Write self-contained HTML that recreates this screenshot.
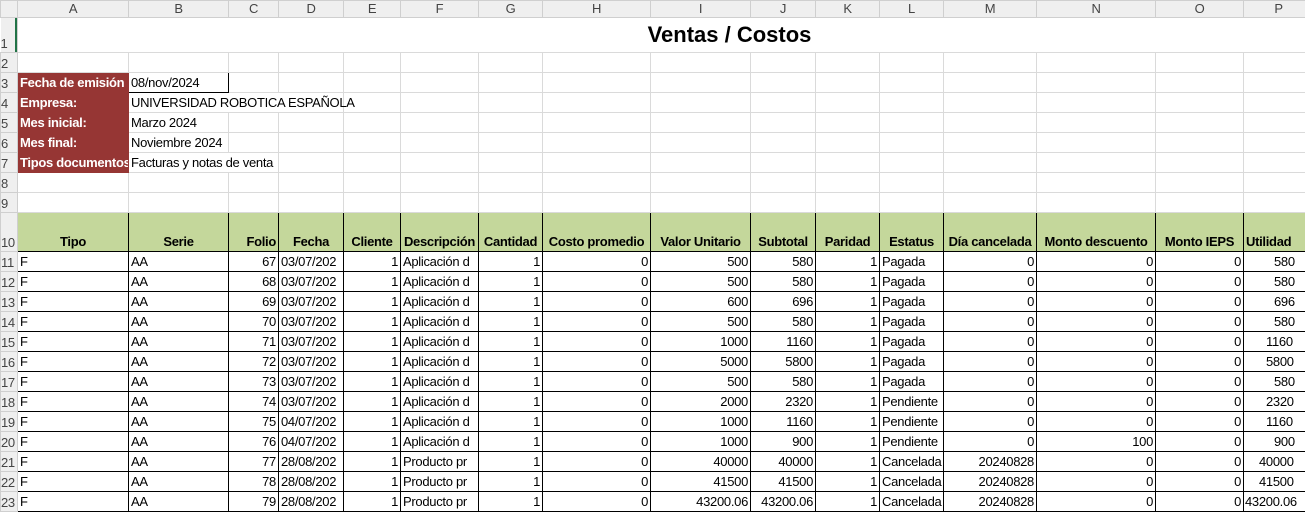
<!DOCTYPE html>
<html><head><meta charset="utf-8"><style>
body{margin:0;width:1305px;height:509px;overflow:hidden;background:#fff;font-family:"Liberation Sans",sans-serif;font-size:13px;letter-spacing:-0.3px;color:#000;position:relative}
table{border-collapse:collapse;table-layout:fixed;position:absolute;left:0;top:0;width:1313px}
td{border:1px solid #dadada;padding:0 2px 1px 2px;white-space:nowrap;overflow:hidden;vertical-align:bottom;height:18px;line-height:16px;box-sizing:content-box}
td.h{background:#efefef;color:#444;text-align:center;vertical-align:middle;border-color:#cfcfcf;font-size:13px}
td.rh{background:#efefef;color:#444;text-align:left;padding:0;border-color:#cfcfcf;font-size:13px}
tr.ch td{height:15px;padding:0}
.m{background:#963634;color:#fff;font-weight:bold;border-color:#963634}
.g{background:#c4d79b;font-weight:bold;text-align:center;border:1px solid #000}
.d{border:1px solid #000}
.r{text-align:right}
.ov{overflow:visible}
</style></head><body>
<table>
<colgroup><col style="width:17px"><col style="width:111px"><col style="width:100px"><col style="width:50px"><col style="width:65px"><col style="width:57px"><col style="width:78px"><col style="width:64px"><col style="width:108px"><col style="width:100px"><col style="width:65px"><col style="width:64px"><col style="width:64px"><col style="width:93px"><col style="width:119px"><col style="width:88px"><col style="width:70px"></colgroup>
<tr class="ch"><td class="h"></td><td class="h">A</td><td class="h">B</td><td class="h">C</td><td class="h">D</td><td class="h">E</td><td class="h">F</td><td class="h">G</td><td class="h">H</td><td class="h">I</td><td class="h">J</td><td class="h">K</td><td class="h">L</td><td class="h">M</td><td class="h">N</td><td class="h">O</td><td class="h">P</td></tr>
<tr><td class="rh" style="height:33px;border-left:none;box-shadow:inset -2px 0 #217346">1</td><td colspan="16" style="height:33px;text-align:center;vertical-align:middle;font-weight:bold;font-size:22px;letter-spacing:0;padding-left:130px;border-left:none">Ventas / Costos</td></tr>
<tr><td class="rh">2</td><td></td><td></td><td></td><td></td><td></td><td></td><td></td><td></td><td></td><td></td><td></td><td></td><td></td><td></td><td></td><td></td></tr>
<tr><td class="rh">3</td><td class="m">Fecha de emisión</td><td style="border:1px solid #000">08/nov/2024</td><td></td><td></td><td></td><td></td><td></td><td></td><td></td><td></td><td></td><td></td><td></td><td></td><td></td><td></td></tr>
<tr><td class="rh">4</td><td class="m">Empresa:</td><td class="ov" style="border-right-color:transparent">UNIVERSIDAD ROBOTICA ESPAÑOLA</td><td style="border-right-color:transparent"></td><td></td><td></td><td></td><td></td><td></td><td></td><td></td><td></td><td></td><td></td><td></td><td></td><td></td></tr>
<tr><td class="rh">5</td><td class="m">Mes inicial:</td><td>Marzo 2024</td><td></td><td></td><td></td><td></td><td></td><td></td><td></td><td></td><td></td><td></td><td></td><td></td><td></td><td></td></tr>
<tr><td class="rh">6</td><td class="m">Mes final:</td><td class="ov">Noviembre 2024</td><td></td><td></td><td></td><td></td><td></td><td></td><td></td><td></td><td></td><td></td><td></td><td></td><td></td><td></td></tr>
<tr><td class="rh">7</td><td class="m">Tipos documentos</td><td class="ov" style="border-right-color:transparent">Facturas y notas de venta</td><td></td><td></td><td></td><td></td><td></td><td></td><td></td><td></td><td></td><td></td><td></td><td></td><td></td><td></td></tr>
<tr><td class="rh">8</td><td></td><td></td><td></td><td></td><td></td><td></td><td></td><td></td><td></td><td></td><td></td><td></td><td></td><td></td><td></td><td></td></tr>
<tr><td class="rh" style="height:17px">9</td><td style="height:17px"></td><td></td><td></td><td></td><td></td><td></td><td></td><td></td><td></td><td></td><td></td><td></td><td></td><td></td><td></td><td></td></tr>
<tr><td class="rh" style="height:38px;vertical-align:bottom">10</td><td class="g">Tipo</td><td class="g">Serie</td><td class="g r">Folio</td><td class="g">Fecha</td><td class="g">Cliente</td><td class="g">Descripción</td><td class="g">Cantidad</td><td class="g">Costo promedio</td><td class="g">Valor Unitario</td><td class="g">Subtotal</td><td class="g">Paridad</td><td class="g">Estatus</td><td class="g">Día cancelada</td><td class="g">Monto descuento</td><td class="g">Monto IEPS</td><td class="g" style="text-align:left">Utilidad</td></tr>
<tr><td class="rh">11</td><td class="d">F</td><td class="d">AA</td><td class="d r">67</td><td class="d">03/07/202</td><td class="d r">1</td><td class="d">Aplicación d</td><td class="d r">1</td><td class="d r">0</td><td class="d r">500</td><td class="d r">580</td><td class="d r">1</td><td class="d">Pagada</td><td class="d r">0</td><td class="d r">0</td><td class="d r">0</td><td class="d" style="padding-left:30px">580</td></tr>
<tr><td class="rh">12</td><td class="d">F</td><td class="d">AA</td><td class="d r">68</td><td class="d">03/07/202</td><td class="d r">1</td><td class="d">Aplicación d</td><td class="d r">1</td><td class="d r">0</td><td class="d r">500</td><td class="d r">580</td><td class="d r">1</td><td class="d">Pagada</td><td class="d r">0</td><td class="d r">0</td><td class="d r">0</td><td class="d" style="padding-left:30px">580</td></tr>
<tr><td class="rh">13</td><td class="d">F</td><td class="d">AA</td><td class="d r">69</td><td class="d">03/07/202</td><td class="d r">1</td><td class="d">Aplicación d</td><td class="d r">1</td><td class="d r">0</td><td class="d r">600</td><td class="d r">696</td><td class="d r">1</td><td class="d">Pagada</td><td class="d r">0</td><td class="d r">0</td><td class="d r">0</td><td class="d" style="padding-left:30px">696</td></tr>
<tr><td class="rh">14</td><td class="d">F</td><td class="d">AA</td><td class="d r">70</td><td class="d">03/07/202</td><td class="d r">1</td><td class="d">Aplicación d</td><td class="d r">1</td><td class="d r">0</td><td class="d r">500</td><td class="d r">580</td><td class="d r">1</td><td class="d">Pagada</td><td class="d r">0</td><td class="d r">0</td><td class="d r">0</td><td class="d" style="padding-left:30px">580</td></tr>
<tr><td class="rh">15</td><td class="d">F</td><td class="d">AA</td><td class="d r">71</td><td class="d">03/07/202</td><td class="d r">1</td><td class="d">Aplicación d</td><td class="d r">1</td><td class="d r">0</td><td class="d r">1000</td><td class="d r">1160</td><td class="d r">1</td><td class="d">Pagada</td><td class="d r">0</td><td class="d r">0</td><td class="d r">0</td><td class="d" style="padding-left:22px">1160</td></tr>
<tr><td class="rh">16</td><td class="d">F</td><td class="d">AA</td><td class="d r">72</td><td class="d">03/07/202</td><td class="d r">1</td><td class="d">Aplicación d</td><td class="d r">1</td><td class="d r">0</td><td class="d r">5000</td><td class="d r">5800</td><td class="d r">1</td><td class="d">Pagada</td><td class="d r">0</td><td class="d r">0</td><td class="d r">0</td><td class="d" style="padding-left:22px">5800</td></tr>
<tr><td class="rh">17</td><td class="d">F</td><td class="d">AA</td><td class="d r">73</td><td class="d">03/07/202</td><td class="d r">1</td><td class="d">Aplicación d</td><td class="d r">1</td><td class="d r">0</td><td class="d r">500</td><td class="d r">580</td><td class="d r">1</td><td class="d">Pagada</td><td class="d r">0</td><td class="d r">0</td><td class="d r">0</td><td class="d" style="padding-left:30px">580</td></tr>
<tr><td class="rh">18</td><td class="d">F</td><td class="d">AA</td><td class="d r">74</td><td class="d">03/07/202</td><td class="d r">1</td><td class="d">Aplicación d</td><td class="d r">1</td><td class="d r">0</td><td class="d r">2000</td><td class="d r">2320</td><td class="d r">1</td><td class="d">Pendiente</td><td class="d r">0</td><td class="d r">0</td><td class="d r">0</td><td class="d" style="padding-left:22px">2320</td></tr>
<tr><td class="rh">19</td><td class="d">F</td><td class="d">AA</td><td class="d r">75</td><td class="d">04/07/202</td><td class="d r">1</td><td class="d">Aplicación d</td><td class="d r">1</td><td class="d r">0</td><td class="d r">1000</td><td class="d r">1160</td><td class="d r">1</td><td class="d">Pendiente</td><td class="d r">0</td><td class="d r">0</td><td class="d r">0</td><td class="d" style="padding-left:22px">1160</td></tr>
<tr><td class="rh">20</td><td class="d">F</td><td class="d">AA</td><td class="d r">76</td><td class="d">04/07/202</td><td class="d r">1</td><td class="d">Aplicación d</td><td class="d r">1</td><td class="d r">0</td><td class="d r">1000</td><td class="d r">900</td><td class="d r">1</td><td class="d">Pendiente</td><td class="d r">0</td><td class="d r">100</td><td class="d r">0</td><td class="d" style="padding-left:30px">900</td></tr>
<tr><td class="rh">21</td><td class="d">F</td><td class="d">AA</td><td class="d r">77</td><td class="d">28/08/202</td><td class="d r">1</td><td class="d">Producto pr</td><td class="d r">1</td><td class="d r">0</td><td class="d r">40000</td><td class="d r">40000</td><td class="d r">1</td><td class="d">Cancelada</td><td class="d r">20240828</td><td class="d r">0</td><td class="d r">0</td><td class="d" style="padding-left:15px">40000</td></tr>
<tr><td class="rh">22</td><td class="d">F</td><td class="d">AA</td><td class="d r">78</td><td class="d">28/08/202</td><td class="d r">1</td><td class="d">Producto pr</td><td class="d r">1</td><td class="d r">0</td><td class="d r">41500</td><td class="d r">41500</td><td class="d r">1</td><td class="d">Cancelada</td><td class="d r">20240828</td><td class="d r">0</td><td class="d r">0</td><td class="d" style="padding-left:15px">41500</td></tr>
<tr><td class="rh">23</td><td class="d">F</td><td class="d">AA</td><td class="d r">79</td><td class="d">28/08/202</td><td class="d r">1</td><td class="d">Producto pr</td><td class="d r">1</td><td class="d r">0</td><td class="d r">43200.06</td><td class="d r">43200.06</td><td class="d r">1</td><td class="d">Cancelada</td><td class="d r">20240828</td><td class="d r">0</td><td class="d r">0</td><td class="d" style="padding-left:1px">43200.06</td></tr>
</table>
</body></html>
